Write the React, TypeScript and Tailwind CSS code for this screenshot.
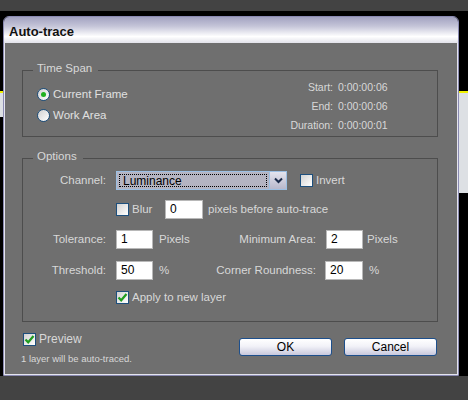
import React from 'react';

function Check({ on }: { on?: boolean }) {
  return (
    <span className="w-[13px] h-[13px] shrink-0 border border-[#1d4f7d] bg-gradient-to-br from-[#d2d2d2] to-white flex items-center justify-center">
      {on && (
        <svg width="11" height="11" viewBox="0 0 11 11">
          <path d="M1.5 5.5 L4.2 8.3 L9.5 2" fill="none" stroke="#1f9c1f" strokeWidth="2.2" />
        </svg>
      )}
    </span>
  );
}

function Radio({ on }: { on?: boolean }) {
  return (
    <span className="w-[13px] h-[13px] shrink-0 rounded-full border border-[#1d4f7d] bg-gradient-to-br from-[#d0d0d0] to-white flex items-center justify-center">
      {on && <span className="w-[5px] h-[5px] rounded-full bg-[#1fb01f]" />}
    </span>
  );
}

function Field({ value, w }: { value: string; w: string }) {
  return (
    <span className={`${w} block h-[19px] shrink-0 bg-white border border-[#b8b8b8] text-black text-[12px] leading-[17px] pl-[4px]`}>
      {value}
    </span>
  );
}

export default function App() {
  const times = [
    ['Start:', '0:00:00:06'],
    ['End:', '0:00:00:06'],
    ['Duration:', '0:00:00:01'],
  ];

  return (
    <div className="w-[468px] h-[400px] overflow-hidden bg-[#434343] flex flex-col font-['Liberation_Sans',Arial,sans-serif] text-[11.5px] text-[#d8d8d8]">
      <div className="h-[11px] shrink-0" />
      <div className="h-[5px] shrink-0 bg-black" />
      <div className="flex h-[360px] shrink-0">
        <div className="w-[3px] flex flex-col">
          <div className="h-[75px] bg-black" />
          <div className="h-[2px] bg-[#f0f000]" />
          <div className="h-[24px] bg-[#dde0e4]" />
          <div className="flex-1 bg-black" />
        </div>

        <div className="w-[456px] bg-black">
          <div className="h-full flex flex-col rounded-t-[6px] border border-[#8a8ab2] overflow-hidden">
            <div className="h-[26px] shrink-0 bg-[linear-gradient(to_bottom,#a2a2c0_0%,#c4c4d8_35%,#ffffff_75%,#e2e2ea_100%)] flex items-center pl-[5px]">
              <span className="text-[13px] font-bold text-[#111] leading-none mt-[3px]">Auto-trace</span>
            </div>
            <div className="flex-1 bg-[#6f6f6f] border-x border-b border-[#e4e4ee] flex flex-col">
              {/* Time Span */}
              <fieldset className="ml-[17px] mt-[18px] w-[416px] border border-[#4d4d4d]">
                <legend className="ml-[10px] pl-[4px] pr-[6px] leading-[14px] pb-[4px]">Time Span</legend>
                <div className="h-[57px] flex">
                  <div className="w-[250px] pl-[14px] pt-[5px] flex flex-col">
                    <div className="h-[21px] flex items-center gap-[3px] text-[#e0e0e0]">
                      <Radio on />
                      <span>Current Frame</span>
                    </div>
                    <div className="h-[21px] flex items-center gap-[3px] text-[#e0e0e0]">
                      <Radio />
                      <span>Work Area</span>
                    </div>
                  </div>
                  <div className="grid grid-cols-[60px_auto] gap-x-[5px] text-[10.5px] leading-[16px]">
                    {times.map(([k, v]) => (
                      <React.Fragment key={k}>
                        <span className="text-right">{k}</span>
                        <span>{v}</span>
                      </React.Fragment>
                    ))}
                  </div>
                </div>
              </fieldset>

              {/* Options */}
              <fieldset className="ml-[17px] mt-[12px] w-[416px] border border-[#4d4d4d]">
                <legend className="ml-[10px] pl-[4px] pr-[6px] leading-[14px] pb-[4px]">Options</legend>
                <div className="flex flex-col pb-[15px]">
                  <div className="mt-[4px] h-[19px] flex items-center">
                    <span className="w-[83px] text-right">Channel:</span>
                    <div className="ml-[10px] flex h-[19px]">
                      <div className="w-[154px] h-full border border-[#9cc0e4] bg-[#b4b4c2] p-[2px]">
                        <div className="h-full border border-dotted border-black text-black text-[12px] leading-[12px] pl-[3px]">Luminance</div>
                      </div>
                      <div className="w-[17px] h-full border border-[#9cc0e4] border-l-0 bg-gradient-to-b from-[#e4e4ee] to-[#b8b8cc] flex items-center justify-center">
                        <svg width="9" height="7" viewBox="0 0 9 7">
                          <path d="M1 1.5 L4.5 5 L8 1.5" fill="none" stroke="#1b2b4a" strokeWidth="2" />
                        </svg>
                      </div>
                    </div>
                    <span className="ml-[13px]"><Check /></span>
                    <span className="ml-[3px]">Invert</span>
                  </div>

                  <div className="mt-[10px] h-[19px] flex items-center">
                    <span className="w-[93px]" />
                    <Check />
                    <span className="w-[36px] pl-[3px]">Blur</span>
                    <Field value="0" w="w-[38px]" />
                    <span className="ml-[5px]">pixels before auto-trace</span>
                  </div>

                  <div className="mt-[11px] h-[19px] flex items-center">
                    <span className="w-[83px] text-right">Tolerance:</span>
                    <span className="ml-[10px]"><Field value="1" w="w-[37px]" /></span>
                    <span className="w-[47px] pl-[6px]">Pixels</span>
                    <span className="w-[116px] text-right">Minimum Area:</span>
                    <span className="ml-[10px]"><Field value="2" w="w-[37px]" /></span>
                    <span className="ml-[4px]">Pixels</span>
                  </div>

                  <div className="mt-[12px] h-[19px] flex items-center">
                    <span className="w-[83px] text-right">Threshold:</span>
                    <span className="ml-[10px]"><Field value="50" w="w-[37px]" /></span>
                    <span className="w-[47px] pl-[6px]">%</span>
                    <span className="w-[116px] text-right">Corner Roundness:</span>
                    <span className="ml-[9px]"><Field value="20" w="w-[38px]" /></span>
                    <span className="ml-[6px]">%</span>
                  </div>

                  <div className="mt-[9px] h-[17px] flex items-center">
                    <span className="w-[93px]" />
                    <Check on />
                    <span className="ml-[3px]">Apply to new layer</span>
                  </div>
                </div>
              </fieldset>

              {/* footer */}
              <div className="flex">
                <div className="flex flex-col">
                  <div className="mt-[9px] ml-[18px] h-[16px] flex items-center gap-[3px] text-[12px]">
                    <Check on />
                    <span>Preview</span>
                  </div>
                  <div className="mt-[6px] ml-[16px] text-[9.5px] leading-[12px]">1 layer will be auto-traced.</div>
                </div>
                <div className="ml-auto mr-[20px] mt-[16px] flex gap-[12px]">
                  <button className="w-[93px] h-[18px] rounded-[3px] border border-[#1d4f8c] bg-[linear-gradient(to_bottom,#ffffff_0%,#f2f2f8_45%,#c8c8dc_100%)] text-black text-[12px] leading-[16px]">OK</button>
                  <button className="w-[93px] h-[18px] rounded-[3px] border border-[#1d4f8c] bg-[linear-gradient(to_bottom,#ffffff_0%,#f2f2f8_45%,#c8c8dc_100%)] text-black text-[12px] leading-[16px]">Cancel</button>
                </div>
              </div>
            </div>
          </div>
        </div>

        <div className="w-[9px] flex flex-col">
          <div className="h-[75px] bg-black" />
          <div className="h-[2px] bg-[#f0f000]" />
          <div className="h-[100px] bg-[#dde0e4]" />
          <div className="flex-1 bg-black" />
        </div>
      </div>
      <div className="flex-1" />
    </div>
  );
}
